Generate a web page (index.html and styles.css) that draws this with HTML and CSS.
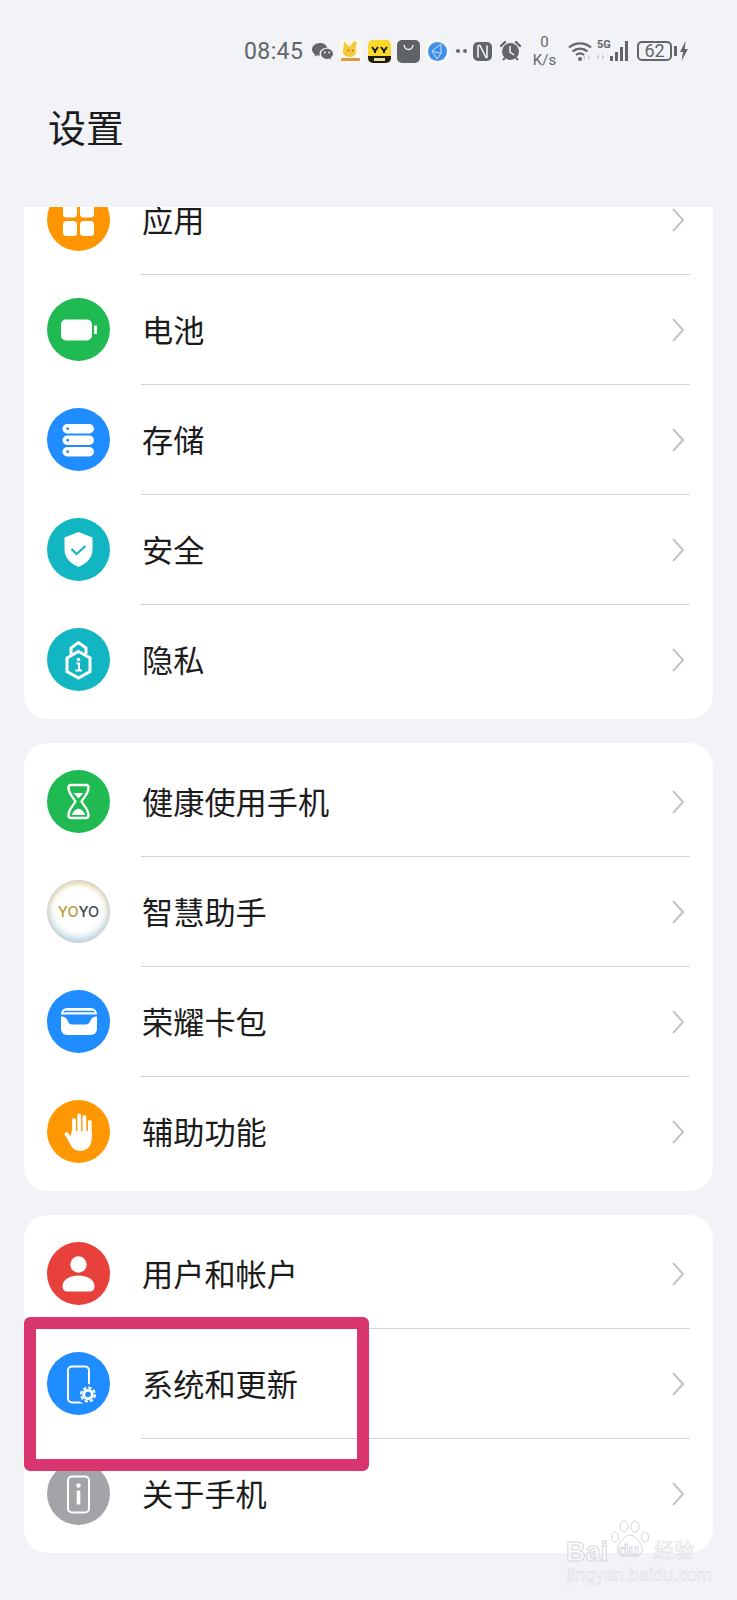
FILE: index.html
```html
<!DOCTYPE html>
<html lang="zh-CN">

<head>
    <meta charset="UTF-8">
    <meta name="viewport" content="width=device-width, initial-scale=1.0">
    <title>设置</title>
    <link rel="stylesheet" href="styles.css">
</head>

<body>
    <div class="page">
        <!-- status bar -->
        <div class="status-bar">
            <span class="time">08:45</span>
            <svg class="st st-wechat" viewBox="0 0 21 17"><path d="M8 0C3.600 0 0 2.900 0 6.400c0 2 1.200 3.800 3 5l-.7 2.300 2.600-1.400c1 .3 2 .4 3.100.4-.3-.7-.4-1.300-.4-2 0-3.300 3.200-5.900 7.200-5.900h.5C14.500 2 11.500 0 8 0z" fill="#62666b"/><path d="M21 10.800c0-2.800-2.700-5.100-6-5.100s-6 2.300-6 5.100 2.700 5.100 6 5.100c.7 0 1.400-.1 2-.3l2 1.100-.5-1.800c1.500-1 2.500-2.400 2.500-4.100z" fill="#62666b"/><circle cx="12.800" cy="9.500" r="1" fill="#f1f3f7"/><circle cx="17.200" cy="9.500" r="1" fill="#f1f3f7"/></svg>
            <svg class="st st-tile" viewBox="0 0 23 23"><rect width="23" height="23" rx="5" fill="#fbf8ee"/><path d="M5 1l4 5 3-.5L15 1l3 1.500-1.500 5.500c2 4-.5 9-5.500 9s-7.500-3-7-6.500S5 6 5 1z" fill="#f6c93a"/><circle cx="9.500" cy="10.500" r="1" fill="#a8761c"/><circle cx="14" cy="10.500" r="1" fill="#a8761c"/><rect x="2" y="18" width="19" height="3" rx="1" fill="#e0954a"/></svg>
            <svg class="st st-tile" viewBox="0 0 23 23"><rect width="23" height="23" rx="5" fill="#fbd92c"/><path d="M0 16h23v2a5 5 0 0 1-5 5H5a5 5 0 0 1-5-5z" fill="#201c10"/><path d="M4 7l3 4 3-4M13 7l3 4 3-4M7 11v2M16 11v2" fill="none" stroke="#201c10" stroke-width="2"/><rect x="6" y="18" width="11" height="3" fill="#e9dca0"/></svg>
            <svg class="st st-tile" viewBox="0 0 23 23"><rect width="23" height="23" rx="5" fill="#5f6267"/><path d="M7 5c.5 3 2 4.500 4.500 4.500S15.500 8 16 5" fill="none" stroke="#fff" stroke-width="1.300"/></svg>
            <svg class="st st-tile" viewBox="0 0 23 23"><rect width="23" height="23" rx="8" fill="#fbfbfd"/><circle cx="11.500" cy="11.500" r="9.500" fill="#3f8fe8"/><path d="M15 4L6 11l9 2.500L15 4zM6 11l5 8 4-5.500" fill="none" stroke="#cfe3f8" stroke-width="1"/></svg>
            <span class="dots"><i></i><i></i></span>
            <svg class="st st-nfc" viewBox="0 0 19 19"><rect width="19" height="19" rx="5" fill="#62666b"/><path d="M5 3.500h2l6 12h1.500M14 3.500v12M5 3.500v12" fill="none" stroke="#f1f3f7" stroke-width="1.600"/></svg>
            <svg class="st st-alarm" viewBox="0 0 21 20"><path d="M1 5l4-4M20 5l-4-4" stroke="#62666b" stroke-width="2.400" stroke-linecap="round"/><circle cx="10.500" cy="10.500" r="8.500" fill="#62666b"/><path d="M3 19l2-2M18 19l-2-2" stroke="#62666b" stroke-width="2"/><path d="M10 5v6l4 3" fill="none" stroke="#f1f3f7" stroke-width="1.500"/></svg>
            <div class="speed"><span>0</span><span>K/s</span></div>
            <svg class="st st-wifi" viewBox="0 0 24 20"><g fill="none" stroke="#62666b" stroke-width="2.200"><path d="M1 6.500C7.500 1 16.500 1 23 6.500"/><path d="M4.500 10.500c4.500-3.800 10.500-3.800 15 0"/><path d="M8 14c2.500-2 5.500-2 8 0"/></g><circle cx="12" cy="18" r="2" fill="#62666b"/><path d="M17 14v5l-2-2.500zM20 14v5l2-2.500z" fill="#c3c6ca"/></svg>
            <div class="signal">
                <span class="net">5G</span>
                <svg class="st st-bars" viewBox="0 0 34 20"><path d="M2 13v6l-2-3zM5 13v6l2-3z" fill="#c3c6ca"/><rect x="13" y="15" width="3" height="5" fill="#62666b"/><rect x="18" y="11" width="3" height="9" fill="#62666b"/><rect x="23" y="6" width="3" height="14" fill="#62666b"/><rect x="28" y="0" width="3" height="20" fill="#62666b"/></svg>
            </div>
            <div class="battery"><span class="battery-level">62</span><i class="battery-nub"></i></div>
            <svg class="st st-bolt" viewBox="0 0 8 20"><path d="M5.500 0L0 11h3L1.500 20 8 8H4.800z" fill="#62666b"/></svg>
        </div>

        <h1 class="page-title">设置</h1>

        <div class="list">
            <div class="card card-first">
                <div class="row">
                    <svg class="icon" viewBox="0 0 63 63"><circle cx="31.500" cy="31.500" r="31.500" fill="#ff9500"/><g fill="#fff"><rect x="16" y="15" width="14" height="14.500" rx="3.500"/><rect x="33" y="15" width="14" height="14.500" rx="3.500"/><rect x="16" y="33" width="14" height="15" rx="3.500"/><rect x="33" y="33" width="14" height="15" rx="3.500"/></g></svg>
                    <div class="row-body"><span class="row-label">应用</span><svg class="chevron" viewBox="0 0 12 24"><path d="M1 1l10 11L1 23"/></svg></div>
                </div>
                <div class="row">
                    <svg class="icon" viewBox="0 0 63 63"><circle cx="31.500" cy="31.500" r="31.500" fill="#1fba52"/><rect x="14" y="21.500" width="31" height="21" rx="5" fill="#fff"/><rect x="47" y="27.500" width="3" height="8.500" fill="#fff"/></svg>
                    <div class="row-body"><span class="row-label">电池</span><svg class="chevron" viewBox="0 0 12 24"><path d="M1 1l10 11L1 23"/></svg></div>
                </div>
                <div class="row">
                    <svg class="icon" viewBox="0 0 63 63"><circle cx="31.500" cy="31.500" r="31.500" fill="#1f8cff"/><g fill="#fff"><rect x="15.500" y="16" width="31.500" height="9.500" rx="4.700"/><rect x="15.500" y="27.500" width="31.500" height="9.500" rx="4.700"/><rect x="15.500" y="39" width="31.500" height="9.500" rx="4.700"/></g><g fill="#1f8cff"><circle cx="20.700" cy="20.700" r="1.400"/><circle cx="20.700" cy="32.200" r="1.400"/><circle cx="20.700" cy="43.700" r="1.400"/></g></svg>
                    <div class="row-body"><span class="row-label">存储</span><svg class="chevron" viewBox="0 0 12 24"><path d="M1 1l10 11L1 23"/></svg></div>
                </div>
                <div class="row">
                    <svg class="icon" viewBox="0 0 63 63"><circle cx="31.500" cy="31.500" r="31.500" fill="#12b6c2"/><path d="M31.500 14l14 5.500v12c0 8.500-6 14-14 17.500-8-3.500-14-9-14-17.500v-12z" fill="#fff"/><path d="M24.500 31l5 5 9-8" fill="none" stroke="#12b6c2" stroke-width="2.200"/></svg>
                    <div class="row-body"><span class="row-label">安全</span><svg class="chevron" viewBox="0 0 12 24"><path d="M1 1l10 11L1 23"/></svg></div>
                </div>
                <div class="row">
                    <svg class="icon" viewBox="0 0 63 63"><circle cx="31.500" cy="31.500" r="31.500" fill="#12b6c2"/><path d="M24 26v-6l7.500-5.500L39 20v6" fill="none" stroke="#fff" stroke-width="3"/><path d="M31.500 23.500L43 30v13.500L31.500 50 20 43.500V30z" fill="none" stroke="#fff" stroke-width="3"/><circle cx="31.500" cy="31.500" r="1.800" fill="#fff"/><path d="M29.500 35.500h2.500v7M28.500 42.500h6.500" fill="none" stroke="#fff" stroke-width="2"/></svg>
                    <div class="row-body row-body-last"><span class="row-label">隐私</span><svg class="chevron" viewBox="0 0 12 24"><path d="M1 1l10 11L1 23"/></svg></div>
                </div>
            </div>

            <div class="card">
                <div class="row">
                    <svg class="icon" viewBox="0 0 63 63"><circle cx="31.500" cy="31.500" r="31.500" fill="#1fba52"/><path d="M24 15h15a2.500 2.500 0 0 1 2.500 2.500c0 6-4 9-7 14 3 5 7 8 7 14a2.500 2.500 0 0 1-2.500 2.500H24a2.500 2.500 0 0 1-2.500-2.500c0-6 4-9 7-14-3-5-7-8-7-14A2.500 2.500 0 0 1 24 15z" fill="none" stroke="#fff" stroke-width="2.400"/><path d="M26.500 23h10l-5 5.500zM25 45c.5-3 3-5.500 6.500-6.500 3.500 1 6 3.500 6.500 6.500z" fill="#fff"/></svg>
                    <div class="row-body"><span class="row-label">健康使用手机</span><svg class="chevron" viewBox="0 0 12 24"><path d="M1 1l10 11L1 23"/></svg></div>
                </div>
                <div class="row">
                    <div class="yoyo"><span class="yoyo-gold">YO</span><span class="yoyo-dark">YO</span></div>
                    <div class="row-body"><span class="row-label">智慧助手</span><svg class="chevron" viewBox="0 0 12 24"><path d="M1 1l10 11L1 23"/></svg></div>
                </div>
                <div class="row">
                    <svg class="icon" viewBox="0 0 63 63"><circle cx="31.500" cy="31.500" r="31.500" fill="#1f8cff"/><rect x="14" y="18" width="36" height="27" rx="6" fill="#fff"/><path d="M17 22.500c0-.5 1-1 2-1h26c1 0 2 .5 2 1" fill="none" stroke="#1f8cff" stroke-width="1.500"/><path d="M14 24.500h36v2c-3 0-5 1-6 3l-1 2c-1 2-2 3-4 3H25c-2 0-3-1-4-3l-1-2c-1-2-3-3-6-3z" fill="#1f8cff"/></svg>
                    <div class="row-body"><span class="row-label">荣耀卡包</span><svg class="chevron" viewBox="0 0 12 24"><path d="M1 1l10 11L1 23"/></svg></div>
                </div>
                <div class="row">
                    <svg class="icon" viewBox="0 0 63 63"><circle cx="31.500" cy="31.500" r="31.500" fill="#ff9800"/><g stroke="#fff" stroke-width="3.800" stroke-linecap="round"><path d="M27 34V20"/><path d="M32.200 34V15.500"/><path d="M37.400 34V17"/><path d="M42.800 36V22"/><path d="M19.500 34l5.500 9"/></g><path d="M25 31h19.700v8c0 7-5 12-11.700 12-5 0-8-3-10-7l-1.500-3z" fill="#fff"/></svg>
                    <div class="row-body row-body-last"><span class="row-label">辅助功能</span><svg class="chevron" viewBox="0 0 12 24"><path d="M1 1l10 11L1 23"/></svg></div>
                </div>
            </div>

            <div class="card card-last">
                <div class="row">
                    <svg class="icon" viewBox="0 0 63 63"><circle cx="31.500" cy="31.500" r="31.500" fill="#e8403a"/><circle cx="31.500" cy="22.500" r="8.200" fill="#fff"/><path d="M15.500 44c0-6.500 8-10.500 16-10.500s16 4 16 10.500c0 4-2 5.500-5 5.500H20.500c-3 0-5-1.500-5-5.500z" fill="#fff"/></svg>
                    <div class="row-body"><span class="row-label">用户和帐户</span><svg class="chevron" viewBox="0 0 12 24"><path d="M1 1l10 11L1 23"/></svg></div>
                </div>
                <div class="row">
                    <svg class="icon" viewBox="0 0 63 63"><circle cx="31.500" cy="31.500" r="31.500" fill="#1f8cff"/><rect x="21" y="14.500" width="21" height="36" rx="4" fill="none" stroke="#fff" stroke-width="2"/><circle cx="41" cy="42.500" r="10.500" fill="#1f8cff"/><circle cx="41" cy="42.500" r="7" fill="none" stroke="#fff" stroke-width="2" stroke-dasharray="3.500 2"/><circle cx="41" cy="42.500" r="4.300" fill="none" stroke="#fff" stroke-width="3"/></svg>
                    <div class="row-body"><span class="row-label">系统和更新</span><svg class="chevron" viewBox="0 0 12 24"><path d="M1 1l10 11L1 23"/></svg></div>
                </div>
                <div class="row">
                    <svg class="icon" viewBox="0 0 63 63"><circle cx="31.500" cy="31.500" r="31.500" fill="#a3a3a8"/><rect x="21" y="14.500" width="21" height="36" rx="4" fill="none" stroke="#fff" stroke-width="2"/><circle cx="31.500" cy="23.500" r="2.200" fill="#fff"/><rect x="29.700" y="28.500" width="3.600" height="14" fill="#fff"/></svg>
                    <div class="row-body row-body-last"><span class="row-label">关于手机</span><svg class="chevron" viewBox="0 0 12 24"><path d="M1 1l10 11L1 23"/></svg></div>
                </div>
                <!-- annotation box drawn on top of the screenshot -->
                <div class="highlight"></div>
            </div>
        </div>

        <!-- watermark -->
        <div class="watermark">
            <svg class="paw" viewBox="0 0 40 38"><g fill="none" stroke="#d3d5d9" stroke-width="1"><ellipse cx="5" cy="17" rx="3.500" ry="5"/><ellipse cx="14" cy="6.500" rx="4" ry="5.500"/><ellipse cx="25" cy="6.500" rx="4" ry="5.500"/><ellipse cx="35" cy="17" rx="3.500" ry="5"/><path d="M20 15c-5 0-7 5-10 8-4 4-3 13 4 13h12c7 0 8-9 4-13-3-3-5-8-10-8z"/></g></svg>
            <span class="wm-bai">Bai</span>
            <span class="wm-du">du</span>
            <span class="wm-jy">经验</span>
            <span class="wm-url">jingyan.baidu.com</span>
        </div>
    </div>
</body>

</html>
```

FILE: styles.css
```css
* {
    box-sizing: border-box;
}

html,
body {
    margin: 0;
    height: 100%;
}

body {
    background-color: #f1f3f7;
    font-family: "Noto Sans CJK SC", "Liberation Sans", sans-serif;
    color: #1c1c1c;
    overflow: hidden;
}

.page {
    position: relative;
    height: 1600px;
    display: flex;
    flex-direction: column;
}

/* status bar */
.status-bar {
    height: 100px;
    flex-shrink: 0;
    padding: 2px 0 0 244px;
    display: flex;
    align-items: center;
    color: #62666b;
    font-family: Roboto, sans-serif;
}

.time {
    width: 60px;
    font-size: 23px;
    white-space: nowrap;
    letter-spacing: 0.4px;
}

.st {
    flex-shrink: 0;
    display: block;
}

.st-wechat {
    width: 21px;
    height: 17px;
    margin-left: 8px;
}

.st-tile {
    width: 23px;
    height: 23px;
    margin-left: 6px;
}

.dots {
    display: flex;
    gap: 3px;
    width: 11px;
    margin-left: 7px;
}

.dots i {
    width: 4px;
    height: 4px;
    border-radius: 50%;
    background-color: #62666b;
}

.st-nfc {
    width: 19px;
    height: 19px;
    margin-left: 6px;
}

.st-alarm {
    width: 21px;
    height: 20px;
    margin-left: 8px;
}

.speed {
    width: 25px;
    margin-left: 11px;
    display: flex;
    flex-direction: column;
    align-items: center;
    font-size: 15px;
    line-height: 18px;
}

.st-wifi {
    width: 24px;
    height: 20px;
    margin-left: 11px;
}

.signal {
    position: relative;
    width: 34px;
    height: 20px;
    margin-left: 5px;
}

.st-bars {
    width: 34px;
    height: 20px;
}

.net {
    position: absolute;
    left: 0;
    top: -2px;
    font-size: 11px;
    line-height: 12px;
    font-weight: 700;
}

.battery {
    position: relative;
    width: 35px;
    height: 20px;
    margin-left: 6px;
    border: 2px solid #62666b;
    border-radius: 5px;
    display: flex;
    align-items: center;
    justify-content: center;
}

.battery-level {
    font-size: 18px;
    line-height: 16px;
}

.battery-nub {
    position: absolute;
    right: -7px;
    top: 3px;
    width: 3px;
    height: 10px;
    background-color: #62666b;
}

.st-bolt {
    width: 8px;
    height: 20px;
    margin-left: 8px;
}

/* title */
.page-title {
    margin: -4px 0 0;
    height: 111px;
    flex-shrink: 0;
    padding: 0 0 51px 48px;
    font-size: 38px;
    line-height: 60px;
    font-weight: 400;
}

/* list */
.list {
    flex: 1;
    overflow: hidden;
    padding: 0 24px;
    display: flex;
    flex-direction: column;
    gap: 24px;
}

.card {
    position: relative;
    flex-shrink: 0;
    background-color: #fff;
    border-radius: 24px;
    padding: 4px 0;
}

.card-first {
    margin-top: -46px;
}

.row {
    height: 110px;
    padding-left: 23px;
    display: flex;
    align-items: center;
    gap: 31px;
}

.icon {
    width: 63px;
    height: 63px;
    flex-shrink: 0;
    margin-top: -1px;
}

.row-body {
    flex: 1;
    height: 100%;
    margin-right: 23px;
    padding-right: 6px;
    border-bottom: 1px solid #d4d4d6;
    display: flex;
    align-items: center;
    justify-content: space-between;
}

.row-body-last {
    border-bottom: none;
}

.row-label {
    margin: -2px 0 0 1px;
    font-size: 31.200px;
    line-height: 40px;
}

.chevron {
    width: 12px;
    height: 24px;
    fill: none;
    stroke: #c4c4c6;
    stroke-width: 2;
}

/* yoyo bubble */
.yoyo {
    width: 63px;
    height: 63px;
    flex-shrink: 0;
    margin-top: -1px;
    border-radius: 50%;
    display: flex;
    align-items: center;
    justify-content: center;
    font-family: Inter, "Liberation Sans", sans-serif;
    font-size: 14.500px;
    font-weight: 500;
    background: radial-gradient(circle at 50% 45%, #fff 45%, #f9f7ee 75%, #e8edf1 95%);
    border: 1px solid #c9cdd0;
    box-shadow: inset 0 3px 4px rgba(214, 190, 110, 0.55), inset 0 -4px 6px rgba(130, 185, 225, 0.55);
}

.yoyo-gold {
    color: #b99a3c;
}

.yoyo-dark {
    color: #3b4a50;
}

/* pink annotation */
.highlight {
    position: absolute;
    left: 0;
    top: 102px;
    width: 345px;
    height: 154px;
    border: 12px solid #d93670;
    border-radius: 6px;
}

/* watermark */
.watermark {
    position: absolute;
    left: 560px;
    top: 1515px;
    width: 150px;
    height: 70px;
    color: rgba(255, 255, 255, 0.55);
    -webkit-text-stroke: 1px #d6d8dc;
}

.paw {
    position: absolute;
    left: 50px;
    top: 5px;
    width: 40px;
    height: 38px;
}

.wm-bai {
    position: absolute;
    left: 6px;
    top: 22px;
    font: 700 27px/30px "Liberation Sans", sans-serif;
}

.wm-du {
    position: absolute;
    left: 58px;
    top: 26px;
    font: 700 17px/20px "Liberation Sans", sans-serif;
}

.wm-jy {
    position: absolute;
    left: 94px;
    top: 22px;
    font-size: 20px;
    line-height: 26px;
    -webkit-text-stroke: 0.5px #d6d8dc;
}

.wm-url {
    position: absolute;
    left: 7px;
    top: 50px;
    font: 400 18px/20px "Liberation Sans", sans-serif;
    white-space: nowrap;
    -webkit-text-stroke: 0.5px #d6d8dc;
}
```
